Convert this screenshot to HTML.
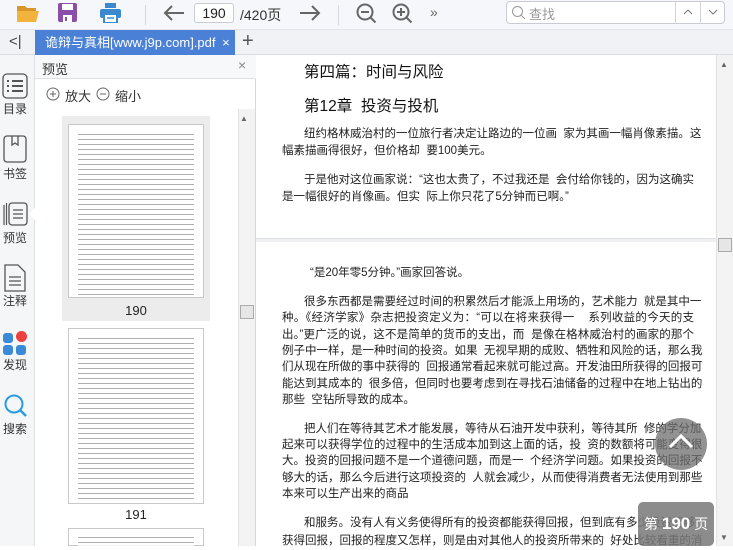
<!DOCTYPE html>
<html><head><meta charset="utf-8"><style>
*{margin:0;padding:0;box-sizing:border-box}
body{width:733px;height:546px;overflow:hidden;background:#fff;font-family:"Liberation Sans","Noto Sans CJK SC",sans-serif;position:relative;color:#333}
.a{position:absolute}
.tb{left:0;top:0;width:733px;height:30px;background:#f5f7fa;border-bottom:1px solid #e2e6ec}
.tabbar{left:0;top:30px;width:733px;height:25px;background:#f0f2f5;border-bottom:1px solid #d8dce2}
.rail{left:0;top:55px;width:35px;height:491px;background:#f4f6f8;border-right:1px solid #dde1e6}
.rl{font-size:12px;color:#333;left:0;width:30px;text-align:center}
.pv{left:35px;top:55px;width:221px;height:491px;background:#fff;border-right:1px solid #d4d8de}
.doc{font-family:"Liberation Sans","Noto Sans CJK SC",sans-serif;font-size:11.5px;color:#222}
.ln{position:absolute;white-space:nowrap;text-align:justify;text-align-last:justify;height:17px;line-height:17px}
.t{position:absolute;font-size:15.5px;color:#111;white-space:nowrap}
.fake{position:absolute;background:repeating-linear-gradient(#fff 0,#fff 2px,#9a9a9a 2px,#9a9a9a 3px,#fff 3px,#fff 5px)}
</style></head><body>
<div class="a tb"></div>
<svg class="a" style="left:16px;top:3px" width="24" height="20" viewBox="0 0 24 20"><path d="M1 3h8l2 2h9v3H1z" fill="#d9962a"/><path d="M1 8h22l-3 11H1z" fill="#f2b33d"/></svg>
<svg class="a" style="left:58px;top:3px" width="19" height="19" viewBox="0 0 19 19"><rect x="0" y="0" width="19" height="19" rx="2" fill="#8a4fa8"/><rect x="4" y="1" width="11" height="6" fill="#fff"/><rect x="5" y="12" width="9" height="7" fill="#fff"/><rect x="7" y="14" width="2" height="4" fill="#8a4fa8"/></svg>
<svg class="a" style="left:100px;top:3px" width="21" height="20" viewBox="0 0 21 20"><rect x="5" y="0" width="11" height="5" fill="#3b8ad0"/><rect x="0" y="6" width="21" height="9" rx="2" fill="#3b8ad0"/><rect x="4" y="11" width="13" height="9" fill="#fff" stroke="#3b8ad0" stroke-width="2"/><line x1="7" y1="15" x2="14" y2="15" stroke="#3b8ad0" stroke-width="1.5"/></svg>
<div class="a" style="left:145px;top:5px;width:1px;height:20px;background:#d6dae0"></div>
<svg class="a" style="left:163px;top:4px" width="22" height="18" viewBox="0 0 22 18"><path d="M21 9H2M9 2L2 9l7 7" stroke="#666" stroke-width="2" fill="none"/></svg>
<div class="a" style="left:194px;top:3px;width:40px;height:20px;border:1px solid #c8ccd2;border-radius:3px;background:#fff;font-size:14px;text-align:center;line-height:18px;color:#222">190</div>
<div class="a" style="left:240px;top:5px;font-size:14px;color:#333">/420页</div>
<svg class="a" style="left:299px;top:4px" width="22" height="18" viewBox="0 0 22 18"><path d="M1 9h19M13 2l7 7-7 7" stroke="#666" stroke-width="2" fill="none"/></svg>
<div class="a" style="left:338px;top:5px;width:1px;height:20px;background:#d6dae0"></div>
<svg class="a" style="left:356px;top:3px" width="22" height="22" viewBox="0 0 22 22"><circle cx="9" cy="9" r="7.5" stroke="#666" stroke-width="2" fill="none"/><path d="M5 9h8M14.5 14.5l5 5" stroke="#666" stroke-width="2"/></svg>
<svg class="a" style="left:392px;top:3px" width="22" height="22" viewBox="0 0 22 22"><circle cx="9" cy="9" r="7.5" stroke="#666" stroke-width="2" fill="none"/><path d="M5 9h8M9 5v8M14.5 14.5l5 5" stroke="#666" stroke-width="2"/></svg>
<div class="a" style="left:430px;top:4px;font-size:14px;color:#666">»</div>
<div class="a" style="left:506px;top:1px;width:219px;height:23px;border:1px solid #c8ccd2;border-radius:4px;background:#fff"></div>
<svg class="a" style="left:511px;top:5px" width="15" height="15" viewBox="0 0 15 15"><circle cx="6.5" cy="6.5" r="5" stroke="#999" fill="none"/><path d="M10 10l4 4" stroke="#999"/></svg>
<div class="a" style="left:529px;top:4px;font-size:13px;color:#999">查找</div>
<div class="a" style="left:675px;top:1px;width:1px;height:23px;background:#d0d4da"></div>
<div class="a" style="left:700px;top:1px;width:1px;height:23px;background:#d0d4da"></div>
<svg class="a" style="left:683px;top:9px" width="10" height="6"><path d="M1 5l4-4 4 4" stroke="#777" fill="none"/></svg>
<svg class="a" style="left:708px;top:9px" width="10" height="6"><path d="M1 1l4 4 4-4" stroke="#777" fill="none"/></svg>

<div class="a tabbar"></div>
<div class="a" style="left:9px;top:33px;font-size:15px;color:#444">&lt;|</div>
<div class="a" style="left:35px;top:30px;width:200px;height:25px;background:#4a80d6;color:#fff;font-size:13px;line-height:25px;padding-left:10px;white-space:nowrap">诡辩与真相[www.j9p.com].pdf <span style="margin-left:3px">×</span></div>
<div class="a" style="left:242px;top:30px;font-size:20px;color:#555">+</div>

<div class="a rail"></div>
<svg class="a" style="left:2px;top:73px" width="26" height="26" viewBox="0 0 26 26"><rect x="1" y="1" width="24" height="24" rx="4" stroke="#555" stroke-width="1.3" fill="none"/><path d="M5 8h2M10 8h11M5 13h2M10 13h11M5 18h2M10 18h11" stroke="#555" stroke-width="2"/></svg>
<div class="a rl" style="top:100px;left:0">目录</div>
<svg class="a" style="left:3px;top:135px" width="24" height="28" viewBox="0 0 24 28"><rect x="1" y="1" width="22" height="26" rx="3" stroke="#555" stroke-width="1.3" fill="none"/><path d="M9 1v9l3-2 3 2V1" stroke="#555" stroke-width="1.3" fill="none"/></svg>
<div class="a rl" style="top:165px">书签</div>
<svg class="a" style="left:3px;top:200px" width="26" height="28" viewBox="0 0 26 28"><path d="M1 5v20M3.5 3v22" stroke="#555" stroke-width="1.2"/><rect x="6" y="3" width="18" height="22" rx="3" stroke="#555" stroke-width="1.3" fill="none"/><path d="M10 10h10M10 14h10M10 18h10" stroke="#555" stroke-width="1.3"/></svg>
<div class="a rl" style="top:229px">预览</div>
<div class="a" style="left:29px;top:207px;width:0;height:0;border-top:7px solid transparent;border-bottom:7px solid transparent;border-right:7px solid #fff"></div>
<svg class="a" style="left:4px;top:264px" width="22" height="28" viewBox="0 0 22 28"><path d="M1 1h13l7 7v19H1z" stroke="#555" stroke-width="1.3" fill="none"/><path d="M5 13h12M5 17h12M5 21h12" stroke="#555" stroke-width="1.3"/></svg>
<div class="a rl" style="top:292px">注释</div>
<div class="a" style="left:3px;top:333px;width:10px;height:10px;background:#3b8ad8;border-radius:3px"></div>
<div class="a" style="left:16px;top:331px;width:11px;height:11px;background:#ee3f3f;border-radius:50%"></div>
<div class="a" style="left:3px;top:345px;width:10px;height:10px;background:#3b8ad8;border-radius:3px"></div>
<div class="a" style="left:16px;top:345px;width:10px;height:10px;background:#3b8ad8;border-radius:3px"></div>
<div class="a rl" style="top:356px">发现</div>
<svg class="a" style="left:3px;top:393px" width="26" height="26" viewBox="0 0 26 26"><circle cx="11" cy="11" r="8.5" stroke="#2a9be0" stroke-width="2" fill="none"/><path d="M17 17l6 6" stroke="#2a9be0" stroke-width="2.5"/></svg>
<div class="a rl" style="top:420px">搜索</div>

<div class="a pv"></div>
<div class="a" style="left:35px;top:55px;width:221px;height:24px;border-bottom:1px solid #dde1e6;background:#f7f8fa"></div>
<div class="a" style="left:42px;top:59px;font-size:13px;color:#333">预览</div>
<div class="a" style="left:238px;top:57px;font-size:14px;color:#888">×</div>
<svg class="a" style="left:46px;top:87px" width="15" height="15"><circle cx="7" cy="7" r="6" stroke="#666" fill="none"/><path d="M4 7h6M7 4v6" stroke="#666"/></svg>
<div class="a" style="left:65px;top:86px;font-size:13px;color:#333">放大</div>
<svg class="a" style="left:96px;top:87px" width="15" height="15"><circle cx="7" cy="7" r="6" stroke="#666" fill="none"/><path d="M4 7h6" stroke="#666"/></svg>
<div class="a" style="left:115px;top:86px;font-size:13px;color:#333">缩小</div>
<div class="a" style="left:35px;top:109px;width:203px;height:437px;background:#fff"></div>
<div class="a" style="left:62px;top:116px;width:148px;height:205px;background:#ececec"></div>
<div class="a" style="left:68px;top:124px;width:136px;height:174px;background:#fff;border:1px solid #c8c8c8"></div>
<div class="fake" style="left:78px;top:132px;width:116px;height:163px;opacity:.8"></div>
<div class="a" style="left:62px;top:303px;width:148px;text-align:center;font-size:13px;color:#222">190</div>
<div class="a" style="left:68px;top:328px;width:136px;height:176px;background:#fff;border:1px solid #c8c8c8"></div>
<div class="fake" style="left:78px;top:336px;width:116px;height:165px;opacity:.8"></div>
<div class="a" style="left:62px;top:507px;width:148px;text-align:center;font-size:13px;color:#222">191</div>
<div class="a" style="left:68px;top:528px;width:136px;height:18px;background:#fff;border:1px solid #c8c8c8"></div>
<div class="fake" style="left:78px;top:535px;width:116px;height:11px;opacity:.8"></div>
<div class="a" style="left:238px;top:109px;width:17px;height:437px;background:#f3f3f3;border-left:1px solid #e2e2e2"></div>
<div class="a" style="left:240px;top:114px;font-size:8px;color:#666">▲</div>
<div class="a" style="left:240px;top:305px;width:14px;height:14px;background:#e6e6e6;border:1px solid #aaa"></div>

<div class="a" style="left:256px;top:55px;width:460px;height:491px;background:#fff"></div>
<div class="a" style="left:256px;top:238px;width:460px;height:4px;background:#eef0f2;border-top:1px solid #dcdfe3"></div>
<div class="a" style="left:716px;top:55px;width:17px;height:491px;background:#f3f3f3;border-left:1px solid #e2e2e2"></div>
<div class="a" style="left:720px;top:60px;font-size:8px;color:#666">▲</div>
<div class="a" style="left:720px;top:533px;font-size:8px;color:#666">▼</div>
<div class="a" style="left:718px;top:238px;width:14px;height:14px;background:#e6e6e6;border:1px solid #aaa"></div>

<div class="doc">
<div class="t" style="left:304px;top:60px">第四篇：时间与风险</div>
<div class="t" style="left:304px;top:94px">第12章&nbsp; 投资与投机</div>
<div class="ln" style="left:304px;top:126px;width:390px">纽约格林威治村的一位旅行者决定让路边的一位画&nbsp; 家为其画一幅肖像素描。这</div>
<div class="ln" style="left:282px;top:143px">幅素描画得很好，但价格却&nbsp; 要100美元。</div>
<div class="ln" style="left:304px;top:172px;width:390px">于是他对这位画家说：“这也太贵了，不过我还是&nbsp; 会付给你钱的，因为这确实</div>
<div class="ln" style="left:282px;top:189px">是一幅很好的肖像画。但实&nbsp; 际上你只花了5分钟而已啊。”</div>

<div class="ln" style="left:310px;top:265px">“是20年零5分钟。”画家回答说。</div>
<div class="ln" style="left:304px;top:294px;width:390px">很多东西都是需要经过时间的积累然后才能派上用场的，艺术能力&nbsp; 就是其中一</div>
<div class="ln" style="left:282px;top:310px;width:412px">种。《经济学家》杂志把投资定义为：“可以在将来获得一&nbsp; &nbsp; 系列收益的今天的支</div>
<div class="ln" style="left:282px;top:327px;width:412px">出。”更广泛的说，这不是简单的货币的支出，而&nbsp; 是像在格林威治村的画家的那个</div>
<div class="ln" style="left:282px;top:343px;width:412px">例子中一样，是一种时间的投资。如果&nbsp; 无视早期的成败、牺牲和风险的话，那么我</div>
<div class="ln" style="left:282px;top:359px;width:412px">们从现在所做的事中获得的&nbsp; 回报通常看起来就可能过高。开发油田所获得的回报可</div>
<div class="ln" style="left:282px;top:376px;width:412px">能达到其成本的&nbsp; 很多倍，但同时也要考虑到在寻找石油储备的过程中在地上钻出的</div>
<div class="ln" style="left:282px;top:392px">那些&nbsp; 空钻所导致的成本。</div>
<div class="ln" style="left:304px;top:421px;width:390px">把人们在等待其艺术才能发展，等待从石油开发中获利，等待其所&nbsp; 修的学分加</div>
<div class="ln" style="left:282px;top:437px;width:412px">起来可以获得学位的过程中的生活成本加到这上面的话，投&nbsp; 资的数额将可能变得很</div>
<div class="ln" style="left:282px;top:453px;width:412px">大。投资的回报问题不是一个道德问题，而是一&nbsp; 个经济学问题。如果投资的回报不</div>
<div class="ln" style="left:282px;top:470px;width:412px">够大的话，那么今后进行这项投资的&nbsp; 人就会减少，从而使得消费者无法使用到那些</div>
<div class="ln" style="left:282px;top:486px">本来可以生产出来的商品</div>
<div class="ln" style="left:304px;top:515px;width:390px">和服务。没有人有义务使得所有的投资都能获得回报，但到底有多少投资能够</div>
<div class="ln" style="left:282px;top:533px;width:412px">获得回报，回报的程度又怎样，则是由对其他人的投资所带来的&nbsp; 好处比较看重的消</div>
</div>

<div class="a" style="left:655px;top:418px;width:52px;height:52px;border-radius:50%;background:rgba(110,110,110,.75)"></div>
<svg class="a" style="left:667px;top:432px" width="28" height="18"><path d="M3 15L14 4l11 11" stroke="#fff" stroke-width="3" fill="none"/></svg>
<div class="a" style="left:638px;top:502px;width:76px;height:44px;border-radius:5px;background:rgba(120,120,120,.85);color:#fff;font-size:14px;line-height:44px;white-space:nowrap;padding-left:6px">第 <b style="font-size:17px">190</b> 页</div>
</body></html>
